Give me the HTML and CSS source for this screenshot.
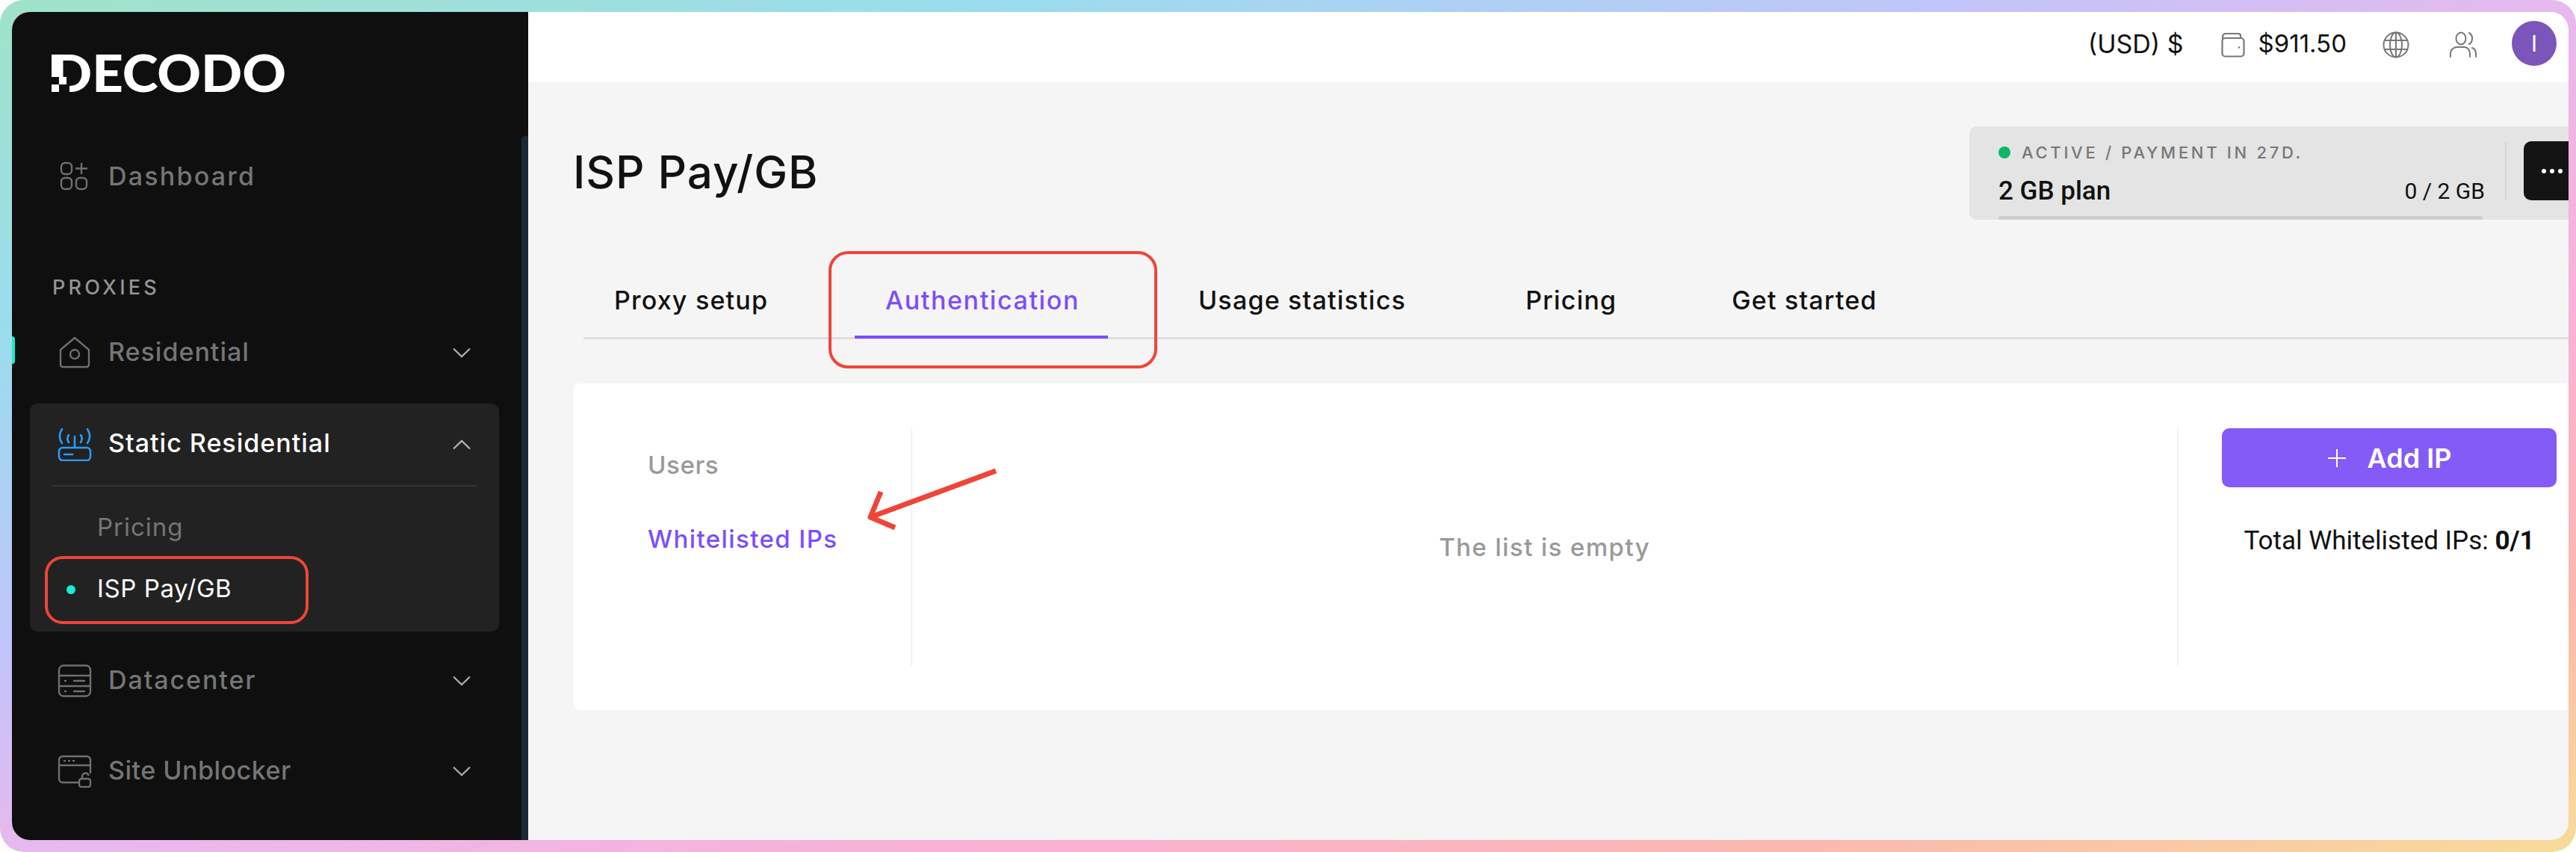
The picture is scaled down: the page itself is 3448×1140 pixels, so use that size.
FILE: index.html
```html
<!DOCTYPE html>
<html lang="en">
<head>
<meta charset="utf-8">
<title>ISP Pay/GB</title>
<link rel="stylesheet" href="styles.css">
</head>
<body>
<div class="frame">
  <div class="window">
    <aside class="sidebar">
      <div class="thumb"></div>
      <span class="edge-tab"></span>
      <svg class="logo" width="340" height="90" viewBox="0 0 340 90" role="img" aria-label="Decodo">
        <text x="7" y="74" textLength="315" lengthAdjust="spacingAndGlyphs" class="logo-text">DECODO</text>
        <rect x="8" y="24" width="12" height="30" fill="#fff"/>
        <rect x="8" y="54" width="24" height="21" fill="#0f0f0f"/>
        <rect x="18" y="54" width="10" height="10" fill="#fff"/>
        <rect x="8" y="64" width="10" height="10" fill="#fff"/>
      </svg>

      <div class="row row-dash">
        <span class="row-icon">
          <svg width="40" height="40" viewBox="0 0 40 40" fill="none" stroke="#6f6f6f" stroke-width="2.4"><rect x="2" y="3" width="14" height="15" rx="5"/><path d="M29 3v15M21 10.500h16"/><rect x="2" y="23" width="14" height="15" rx="5"/><rect x="22" y="23" width="14" height="15" rx="5"/></svg>
        </span>
        <span class="row-label">Dashboard</span>
      </div>

      <div class="section-label">PROXIES</div>

      <div class="row row-res">
        <span class="row-icon">
          <svg width="44" height="44" viewBox="0 0 44 44" fill="none" stroke="#6f6f6f" stroke-width="2.4" stroke-linejoin="round"><path d="M3 18 22 2l19 16v20a3 3 0 0 1-3 3H6a3 3 0 0 1-3-3z"/><circle cx="22" cy="24" r="6"/></svg>
        </span>
        <span class="row-label">Residential</span>
        <svg class="chev" width="24" height="14" viewBox="0 0 24 14" fill="none" stroke="#a8a8a8" stroke-width="2.4"><path d="M1 1.500 12 12 23 1.500"/></svg>
      </div>

      <div class="group">
        <div class="row group-head">
          <span class="row-icon">
            <svg width="46" height="44" viewBox="0 0 46 44" fill="none" stroke="#2b9bfb" stroke-width="2.6" stroke-linecap="round"><rect x="2" y="26" width="42" height="17" rx="5"/><path d="M9 35h11M23 26V11M15 19c-2-3-2-7 0-10M31 19c2-3 2-7 0-10M6 20C2 14 2 7 6 1M40 20c4-6 4-13 0-19"/></svg>
          </span>
          <span class="row-label active">Static Residential</span>
          <svg class="chev" width="24" height="14" viewBox="0 0 24 14" fill="none" stroke="#b0b0b0" stroke-width="2.4"><path d="M1 12.500 12 2 23 12.500"/></svg>
        </div>
        <div class="sub-list">
          <div class="sub-item">Pricing</div>
          <div class="sub-item current"><span class="sub-dot"></span>ISP Pay/GB</div>
        </div>
      </div>

      <div class="row row-dc">
        <span class="row-icon">
          <svg width="46" height="44" viewBox="0 0 46 44" fill="none" stroke="#6f6f6f" stroke-width="2.4" stroke-linecap="round"><rect x="2" y="1.500" width="42" height="41" rx="6"/><path d="M2 15h42M2 29h42M10 22h1M10 36h1M22 22h14M22 36h14"/></svg>
        </span>
        <span class="row-label">Datacenter</span>
        <svg class="chev" width="24" height="14" viewBox="0 0 24 14" fill="none" stroke="#a8a8a8" stroke-width="2.4"><path d="M1 1.500 12 12 23 1.500"/></svg>
      </div>

      <div class="row row-su">
        <span class="row-icon">
          <svg width="46" height="44" viewBox="0 0 46 44" fill="none" stroke="#6f6f6f" stroke-width="2.4" stroke-linecap="round"><path d="M27 37H7a5 5 0 0 1-5-5V7a5 5 0 0 1 5-5h32a5 5 0 0 1 5 5v17M2 14h42M9 8h1M15 8h1M21 8h1"/><rect x="29" y="32" width="15" height="11" rx="3"/><path d="M33 32v-3a4.500 4.500 0 0 1 8.500-2"/></svg>
        </span>
        <span class="row-label">Site Unblocker</span>
        <svg class="chev" width="24" height="14" viewBox="0 0 24 14" fill="none" stroke="#a8a8a8" stroke-width="2.4"><path d="M1 1.500 12 12 23 1.500"/></svg>
      </div>
    </aside>

    <main class="main">
      <header class="topbar">
        <span class="currency">(USD) $</span>
        <svg class="ic-wallet" width="32" height="34" viewBox="0 0 32 34" fill="none" stroke="#777" stroke-width="2.200"><path d="M2 10V6a4 4 0 0 1 4-4h17a3 3 0 0 1 3 3v3"/><rect x="1.500" y="8" width="29" height="24.500" rx="4"/><circle cx="24" cy="20.500" r="1.300" fill="#777" stroke="none"/></svg>
        <span class="balance">$911.50</span>
        <svg class="ic-globe" width="36" height="36" viewBox="0 0 36 36" fill="none" stroke="#777" stroke-width="2"><circle cx="18" cy="18" r="16.500"/><ellipse cx="18" cy="18" rx="8" ry="16.500"/><path d="M18 1.500v33M2.500 12h31M2.500 24h31"/></svg>
        <svg class="ic-users" width="38" height="36" viewBox="0 0 38 36" fill="none" stroke="#777" stroke-width="2" stroke-linecap="round"><ellipse cx="16" cy="9.500" rx="6.500" ry="8"/><path d="M2 34v-4c0-6 5-9 9-9h9c5 0 8 4 8 9v4M27 2c3 1.500 4 4.500 4 7.500s-1 6-4 7.500M31 22c3 1 5 4 5 8v4"/></svg>
        <span class="avatar">I</span>
      </header>

      <section class="page">
        <div class="title-row">
          <h1 class="title">ISP Pay/GB</h1>
          <div class="plan">
            <div class="plan-info">
              <div class="plan-status"><span class="status-dot"></span>ACTIVE / PAYMENT IN 27D.</div>
              <div class="plan-line"><span class="plan-name">2 GB plan</span><span class="plan-usage">0 / 2 GB</span></div>
              <div class="plan-bar"></div>
            </div>
            <div class="plan-div"></div>
            <div class="plan-more"><span></span><span></span><span></span></div>
          </div>
        </div>

        <nav class="tabs">
          <span class="tab">Proxy setup</span>
          <span class="tab tab-active">Authentication</span>
          <span class="tab">Usage statistics</span>
          <span class="tab">Pricing</span>
          <span class="tab">Get started</span>
        </nav>

        <div class="card">
          <div class="card-side">
            <div class="side-item">Users</div>
            <div class="side-item side-active">Whitelisted IPs</div>
          </div>
          <div class="card-list">The list is empty</div>
          <div class="card-actions">
            <button class="add-btn" type="button">
              <svg width="26" height="26" viewBox="0 0 26 26" fill="none" stroke="#fff" stroke-width="2"><path d="M13 1v24M1 13h24"/></svg>
              <span>Add IP</span>
            </button>
            <div class="total">Total Whitelisted IPs: <b>0/1</b></div>
          </div>
        </div>
      </section>
    </main>
  </div>

  <svg class="notes" width="3448" height="1140" viewBox="0 0 3448 1140" fill="none" stroke="#ef4538">
    <rect x="1111" y="338" width="436" height="153" rx="24" stroke-width="4"/>
    <rect x="62" y="746" width="349" height="87" rx="22" stroke-width="4"/>
    <path d="M1333 630 1165 692M1179 658 1165 692 1198 706" stroke-width="7" stroke-linejoin="round"/>
  </svg>
</div>
</body>
</html>
```
FILE: styles.css
```css
* { box-sizing: border-box; }
html, body { margin: 0; padding: 0; }
body { font-family: "Inter", "Liberation Sans", sans-serif; }

.frame {
  position: relative;
  width: 3448px;
  height: 1140px;
  padding: 16px 10px 16px 16px;
  overflow: hidden;
  border-radius: 32px;
  background: linear-gradient(to bottom right, #a0e3c8 0%, #9bdcee 20%, #c0c4fa 38%, #e6b9ee 50%, #fbb1d3 70%, #fab9ae 85%, #f7dc9a 100%);
}
.window {
  display: flex;
  height: 100%;
  overflow: hidden;
  border-radius: 24px;
  background: #f5f5f5;
}
.notes { position: absolute; left: 0; top: 0; pointer-events: none; }

/* Sidebar */
.sidebar {
  position: relative;
  flex: 0 0 691px;
  background: #0f0f0f;
  display: flex;
  flex-direction: column;
  padding-top: 33px;
}
.thumb {
  position: absolute;
  right: 0;
  top: 166px;
  bottom: 0;
  width: 9px;
  border-radius: 5px 0 0 0;
  background: #1a2937;
}
.edge-tab {
  position: absolute;
  left: 0;
  top: 434px;
  width: 4px;
  height: 37px;
  border-radius: 0 4px 4px 0;
  background: #19ecd0;
}
.logo { display: block; margin-left: 45px; flex: none; }
.logo-text { font-family: "Lato", sans-serif; font-weight: 900; font-size: 69px; fill: #fff; }

.row {
  display: flex;
  align-items: center;
  height: 80px;
  padding: 0 77px 0 60px;
  flex: none;
}
.row-icon { flex: 0 0 48px; display: flex; align-items: center; justify-content: center; }
.row-label {
  margin: -4px 0 0 21px;
  font-size: 34px;
  letter-spacing: 1px;
  color: #757575;
  font-weight: 500;
}
.row-label.active { color: #fff; }
.chev { margin-left: auto; flex: none; }
.row-dash { margin-top: 56px; }
.row-dash .row-label { letter-spacing: 2.2px; margin-top: 0; }
.section-label {
  margin: 95px 0 0 54px;
  height: 30px;
  line-height: 30px;
  font-size: 27px;
  letter-spacing: 4.200px;
  color: #959595;
  font-weight: 500;
  flex: none;
}
.row-res { margin-top: 32px; }
.group {
  margin: 28px 39px 0 24px;
  padding: 0 29px 15px;
  background: #222;
  border-radius: 10px;
  flex: none;
}
.group-head {
  height: 111px;
  padding: 0 9px 0 7px;
  border-bottom: 2px solid #333;
}
.sub-list { padding-top: 15px; }
.sub-item {
  position: relative;
  height: 82px;
  display: flex;
  align-items: center;
  padding: 0 0 4px 61px;
  font-size: 33px;
  letter-spacing: 1px;
  color: #757575;
}
.sub-item.current { color: #fff; font-weight: 400; letter-spacing: .6px; }
.sub-dot {
  position: absolute;
  left: 20px;
  top: 35px;
  width: 12px;
  height: 12px;
  border-radius: 50%;
  background: #19ecd0;
}
.row-dc { margin-top: 26px; }
.row-dc .row-label { letter-spacing: 1.900px; }
.row-su { margin-top: 41px; }
.row-su .row-label { letter-spacing: .5px; }

/* Main */
.main { flex: 1; min-width: 0; display: flex; flex-direction: column; }
.topbar {
  flex: 0 0 94px;
  background: #fff;
  display: flex;
  align-items: center;
  justify-content: flex-end;
  padding: 0 16px 10px 0;
  color: #111;
  font-size: 33px;
}
.currency { font-size: 34px; }
.ic-wallet { margin-left: 50px; margin-top: 4px; }
.balance { margin-left: 18px; }
.ic-globe { margin-left: 48px; margin-top: 4px; }
.ic-users { margin-left: 53px; margin-top: 4px; }
.avatar {
  margin-left: 46px;
  width: 60px;
  height: 60px;
  border-radius: 50%;
  background: #7c55bb;
  color: #fff;
  font-size: 30px;
  display: flex;
  align-items: center;
  justify-content: center;
}

.page { flex: 1; min-height: 0; padding-left: 60px; }
.title-row {
  display: flex;
  justify-content: space-between;
  align-items: center;
  margin-top: 59px;
  height: 125px;
}
.title {
  margin: 0 0 3px;
  font-size: 60px;
  font-weight: 500;
  letter-spacing: 1px;
  color: #111;
}
.plan {
  width: 802px;
  height: 125px;
  background: #e4e4e4;
  border-radius: 10px 0 0 10px;
  display: flex;
  align-items: flex-start;
  padding: 20px 0 0 39px;
  overflow: hidden;
}
.plan-info { width: 652px; flex: none; }
.plan-status {
  display: flex;
  align-items: center;
  height: 30px;
  font-size: 22px;
  font-weight: 500;
  letter-spacing: 3.700px;
  color: #777;
}
.status-dot {
  width: 16px;
  height: 16px;
  border-radius: 50%;
  background: #10b866;
  margin-right: 15px;
}
.plan-line {
  display: flex;
  justify-content: space-between;
  align-items: center;
  height: 44px;
  margin-top: 14px;
  padding-right: 1px;
  font-family: "Roboto", sans-serif;
  font-weight: 500;
  color: #111;
}
.plan-name { font-size: 35px; }
.plan-usage { font-size: 30px; font-weight: 400; }
.plan-bar { height: 6px; margin-top: 12px; background: #cdcdcd; border-radius: 3px; width: 648px; }
.plan-div { width: 2px; height: 78px; margin: 1px 0 0 26px; background: #d4d4d4; flex: none; }
.plan-more {
  flex: none;
  width: 80px;
  height: 79px;
  margin-left: 23px;
  background: #141414;
  border-radius: 10px;
  display: flex;
  align-items: center;
  gap: 5px;
  padding-left: 24px;
}
.plan-more span { width: 6px; height: 6px; border-radius: 50%; background: #fff; }

.tabs {
  display: grid;
  grid-template-columns: 283px 339px 358px 196px auto;
  column-gap: 80px;
  margin: 59px 0 0 14px;
  height: 101px;
  border-bottom: 3px solid #ddd;
}
.tab {
  height: 100px;
  padding: 29px 41px 0;
  line-height: 40px;
  font-size: 34px;
  font-weight: 500;
  letter-spacing: 1.200px;
  color: #111;
  white-space: nowrap;
}
.tab-active { color: #7c4dff; border-bottom: 4px solid #7c4dff; letter-spacing: 1.600px; }

.card {
  display: flex;
  margin-top: 59px;
  height: 437px;
  padding-top: 60px;
  background: #fff;
  border-radius: 10px 0 0 10px;
}
.card-side {
  flex: 0 0 454px;
  height: 318px;
  padding: 29px 0 0 100px;
  border-right: 2px solid #f2f2f2;
}
.side-item { height: 40px; line-height: 40px; font-size: 33px; color: #999; font-weight: 500; letter-spacing: .6px; }
.side-active { margin-top: 59px; color: #7c4dff; letter-spacing: 1.400px; }
.card-list {
  flex: 1;
  height: 318px;
  display: flex;
  align-items: center;
  justify-content: center;
  font-size: 33px;
  font-weight: 500;
  letter-spacing: 1.400px;
  color: #999;
}
.card-actions {
  flex: 0 0 524px;
  height: 318px;
  padding: 0 16px 0 58px;
  border-left: 2px solid #f2f2f2;
}
.add-btn {
  display: flex;
  align-items: center;
  justify-content: center;
  gap: 28px;
  width: 100%;
  height: 79px;
  border: 0;
  border-radius: 10px;
  background: #855bf8;
  color: #fff;
  font-family: "Inter", sans-serif;
  font-size: 36px;
  font-weight: 600;
}
.total {
  margin-top: 52px;
  text-align: center;
  font-family: "Roboto", sans-serif;
  font-size: 35px;
  line-height: 40px;
  color: #111;
}
.total b { font-weight: 700; }
```
